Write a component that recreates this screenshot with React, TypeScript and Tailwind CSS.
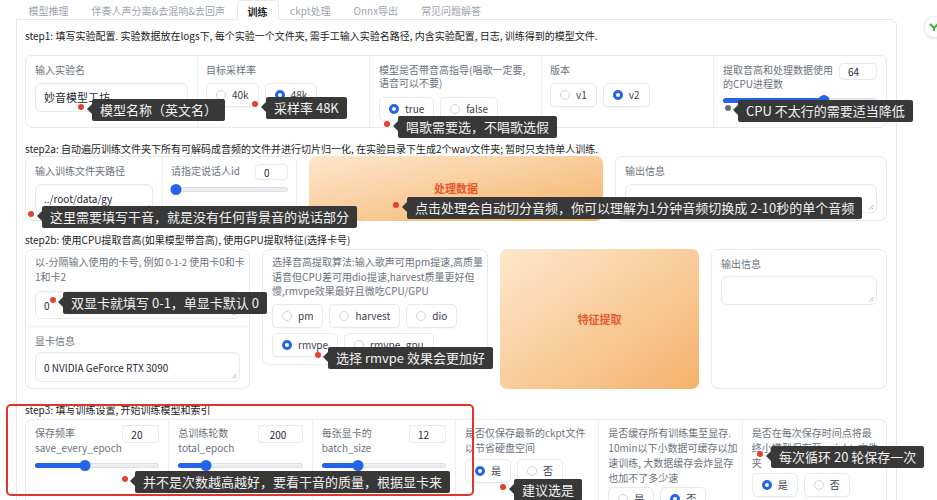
import React from "react";

const box = "rounded-[7px] border border-[#e8e9ed] bg-white";
const lab = "text-[10px] text-[#6b7280]";

function Radio({ label, on = false }: { label: string; on?: boolean }) {
  return (
    <div className="flex items-center gap-[6px] h-[24px] px-[9px] rounded-[5px] border border-[#e8e9ed] bg-white text-[10px] text-[#374151] shadow-[0_1px_1px_rgba(0,0,0,0.03)]">
      <span
        className={
          on
            ? "w-[10px] h-[10px] rounded-full border-[3px] border-[#2563eb] bg-white"
            : "w-[10px] h-[10px] rounded-full border border-[#d4d4d8] bg-white"
        }
      />
      <span className="leading-none">{label}</span>
    </div>
  );
}

function NumBox({ value, className }: { value: string; className: string }) {
  return (
    <div
      className={
        "shrink-0 flex items-center px-[8px] rounded-[4px] border border-[#e8e9ed] bg-white text-[10px] text-[#1f2937] " +
        className
      }
    >
      {value}
    </div>
  );
}

function Slider({ pct }: { pct: number }) {
  return (
    <div className="relative h-[10px] flex items-center">
      <div className="w-full h-[5px] rounded-full bg-[#eceef1] border border-[#dcdfe4]" />
      <div className="absolute inset-x-[5px] top-0 h-[10px]">
        <div
          className="absolute left-[-5px] top-[2.5px] h-[5px] rounded-full bg-[#2563eb]"
          style={{ width: `calc(${pct}% + 5px)` }}
        />
        <div
          className="absolute top-[-0.5px] w-[11px] h-[11px] rounded-full bg-[#2563eb] -translate-x-1/2"
          style={{ left: `${pct}%` }}
        />
      </div>
    </div>
  );
}

function TextBox({ value, className }: { value?: string; className: string }) {
  return (
    <div
      className={
        "relative flex items-center px-[8px] rounded-[6px] border border-[#e8e9ed] bg-white text-[10px] text-[#1f2937] shadow-[inset_0_1px_2px_rgba(0,0,0,0.03)] " +
        className
      }
    >
      {value}
      <svg className="absolute right-[2px] bottom-[2px]" width="6" height="6" viewBox="0 0 6 6">
        <path d="M5.5 1 L1 5.5 M5.5 3.5 L3.5 5.5" stroke="#9ca3af" strokeWidth="0.8" />
      </svg>
    </div>
  );
}

function Button({ label, className }: { label: string; className: string }) {
  return (
    <div
      className={
        "rounded-[7px] bg-linear-to-br from-[#fde7cc] to-[#f4b268] flex items-center justify-center text-[11px] font-semibold text-[#e8572a] " +
        className
      }
    >
      {label}
    </div>
  );
}

function Tip({
  x,
  y,
  dx,
  dy,
  text,
  gray = false,
}: {
  x: number;
  y: number;
  dx: number;
  dy: number;
  text: string;
  gray?: boolean;
}) {
  return (
    <>
      <div
        className={
          gray
            ? "absolute w-[6px] h-[6px] rounded-full bg-[#6b6b6b] -translate-x-1/2 -translate-y-1/2"
            : "absolute w-[6px] h-[6px] rounded-full bg-[#e2412f] -translate-x-1/2 -translate-y-1/2"
        }
        style={{ left: dx, top: dy }}
      />
      <div
        className="absolute h-[22px] px-[8px] rounded-[2px] bg-[#383838] text-[13px] leading-[22px] text-[#f2f2f2] whitespace-nowrap"
        style={{ left: x, top: y }}
      >
        <span className="absolute left-[-5px] top-[5px] w-0 h-0 border-y-[5px] border-y-transparent border-r-[5px] border-r-[#383838]" />
        {text}
      </div>
    </>
  );
}

export default function App() {
  const tabs = ["模型推理", "伴奏人声分离&去混响&去回声", "训练", "ckpt处理", "Onnx导出", "常见问题解答"];
  return (
    <div className="relative w-[937px] h-[500px] overflow-hidden bg-white font-['Noto_Sans_CJK_SC','Noto_Sans',sans-serif]">
      {/* tabs */}
      <div className="flex h-[19px] ml-[17px]">
        {tabs.map((t) =>
          t === "训练" ? (
            <div
              key={t}
              className="relative z-10 h-[20px] px-[10px] pt-[4px] leading-[14px] text-[10px] font-semibold text-[#222] bg-white border border-b-0 border-[#e5e7eb] rounded-t-[5px]"
            >
              {t}
            </div>
          ) : (
            <div key={t} className="px-[11.5px] pt-[4px] leading-[14px] text-[10px] text-[#9ca3af]">
              {t}
            </div>
          )
        )}
      </div>

      {/* panel */}
      <div className="ml-[16px] w-[881px] h-[490px] border border-[#e5e7eb] rounded-tr-[6px] pl-[8px] pt-[9px]">
        <div className="w-[862px]">
          <div className="text-[10px] leading-[14px] text-[#222]">
            step1: 填写实验配置. 实验数据放在logs下, 每个实验一个文件夹, 需手工输入实验名路径, 内含实验配置, 日志, 训练得到的模型文件.
          </div>
          <div className={box + " mt-[12px] h-[73px] grid grid-cols-5 divide-x divide-[#eeeff2]"}>
            <div className="px-[9px] pt-[7px]">
              <div className={lab + " leading-[13px]"}>输入实验名</div>
              <TextBox value="妙音模型工坊" className="mt-[7px] h-[29px] text-[11px]" />
            </div>
            <div className="px-[8px] pt-[7px]">
              <div className={lab + " leading-[13px]"}>目标采样率</div>
              <div className="mt-[7px] flex gap-[6px]">
                <Radio label="40k" />
                <Radio label="48k" on />
              </div>
            </div>
            <div className="px-[9px] pt-[7px]">
              <div className={lab + " leading-[13px]"}>
                模型是否带音高指导(唱歌一定要,
                <br />
                语音可以不要)
              </div>
              <div className="mt-[8px] flex gap-[6px]">
                <Radio label="true" on />
                <Radio label="false" />
              </div>
            </div>
            <div className="px-[8px] pt-[7px]">
              <div className={lab + " leading-[13px]"}>版本</div>
              <div className="mt-[7px] flex gap-[6px]">
                <Radio label="v1" />
                <Radio label="v2" on />
              </div>
            </div>
            <div className="px-[9px] pt-[7px]">
              <div className="flex justify-between">
                <div className={lab + " leading-[14px]"}>
                  提取音高和处理数据使用
                  <br />
                  的CPU进程数
                </div>
                <NumBox value="64" className="w-[38px] h-[17px]" />
              </div>
              <div className="mt-[4px]">
                <Slider pct={67} />
              </div>
            </div>
          </div>

          {/* step2a */}
          <div className="mt-[14px] text-[10px] leading-[14px] text-[#222]">
            step2a: 自动遍历训练文件夹下所有可解码成音频的文件并进行切片归一化, 在实验目录下生成2个wav文件夹; 暂时只支持单人训练.
          </div>
          <div className="grid grid-cols-[272px_294px_1fr] gap-[12px] h-[65px]">
            <div className={box + " grid grid-cols-[137px_1fr] divide-x divide-[#eeeff2]"}>
              <div className="px-[9px] pt-[7px]">
                <div className={lab + " leading-[13px]"}>输入训练文件夹路径</div>
                <TextBox value="../root/data/gy" className="mt-[7px] h-[29px]" />
              </div>
              <div className="px-[8px] pt-[7px]">
                <div className="flex justify-between">
                  <div className={lab + " leading-[13px]"}>请指定说话人id</div>
                  <NumBox value="0" className="w-[33px] h-[16px]" />
                </div>
                <div className="mt-[4px]">
                  <Slider pct={0} />
                </div>
              </div>
            </div>
            <Button label="处理数据" className="h-[65px]" />
            <div className={box + " px-[9px] pt-[7px]"}>
              <div className={lab + " leading-[13px]"}>输出信息</div>
              <TextBox className="mt-[7px] h-[29px]" />
            </div>
          </div>

          {/* step2b */}
          <div className="mt-[12px] text-[10px] leading-[14px] text-[#222]">
            step2b: 使用CPU提取音高(如果模型带音高), 使用GPU提取特征(选择卡号)
          </div>
          <div className="mt-[2px] grid grid-cols-[225px_226px_199px_1fr] gap-[12px] items-start">
            <div className={box + " h-[140px]"}>
              <div className="px-[9px] pt-[5px] pb-[7px] border-b border-[#eeeff2]">
                <div className={lab + " leading-[14px] whitespace-nowrap"}>
                  以-分隔输入使用的卡号, 例如 <span className="text-[9px]">0-1-2</span> 使用卡0和卡
                  <br />
                  1和卡2
                </div>
                <TextBox value="0" className="mt-[7px] h-[28px]" />
              </div>
              <div className="px-[9px] pt-[7px]">
                <div className={lab + " leading-[13px]"}>显卡信息</div>
                <TextBox value="0 NVIDIA GeForce RTX 3090" className="mt-[5px] h-[30px]" />
              </div>
            </div>
            <div className={box + " h-[116px] px-[9px] pt-[5px]"}>
              <div className={lab + " leading-[14.5px] whitespace-nowrap"}>
                选择音高提取算法:输入歌声可用pm提速,高质量
                <br />
                语音但CPU差可用dio提速,harvest质量更好但
                <br />
                慢,rmvpe效果最好且微吃CPU/GPU
              </div>
              <div className="mt-[5px] flex flex-wrap gap-x-[6px] gap-y-[5px]">
                <Radio label="pm" />
                <Radio label="harvest" />
                <Radio label="dio" />
                <Radio label="rmvpe" on />
                <Radio label="rmvpe_gpu" />
              </div>
            </div>
            <Button label="特征提取" className="h-[140px]" />
            <div className={box + " h-[140px] px-[9px] pt-[7px]"}>
              <div className={lab + " leading-[13px]"}>输出信息</div>
              <TextBox className="mt-[6px] h-[29px]" />
            </div>
          </div>

          {/* step3 */}
          <div className="mt-[14px] text-[10px] leading-[14px] text-[#222]">
            step3: 填写训练设置, 开始训练模型和索引
          </div>
          <div className={box + " mt-[2px] h-[100px] grid grid-cols-6 divide-x divide-[#eeeff2]"}>
            <div className="px-[9px] pt-[5px]">
              <div className="flex justify-between">
                <div className={lab + " leading-[15px]"}>
                  保存频率
                  <br />
                  save_every_epoch
                </div>
                <NumBox value="20" className="w-[37px] h-[18px]" />
              </div>
              <div className="mt-[5px]">
                <Slider pct={39} />
              </div>
            </div>
            <div className="px-[9px] pt-[5px]">
              <div className="flex justify-between">
                <div className={lab + " leading-[15px]"}>
                  总训练轮数
                  <br />
                  total_epoch
                </div>
                <NumBox value="200" className="w-[45px] h-[18px] pl-[11px]" />
              </div>
              <div className="mt-[5px]">
                <Slider pct={20} />
              </div>
            </div>
            <div className="px-[9px] pt-[5px]">
              <div className="flex justify-between">
                <div className={lab + " leading-[15px]"}>
                  每张显卡的
                  <br />
                  batch_size
                </div>
                <NumBox value="12" className="w-[37px] h-[18px]" />
              </div>
              <div className="mt-[5px]">
                <Slider pct={27} />
              </div>
            </div>
            <div className="px-[9px] pt-[5px]">
              <div className={lab + " leading-[15px] whitespace-nowrap"}>
                是否仅保存最新的ckpt文件
                <br />
                以节省硬盘空间
              </div>
              <div className="mt-[4px] flex gap-[6px]">
                <Radio label="是" on />
                <Radio label="否" />
              </div>
            </div>
            <div className="px-[9px] pt-[5px]">
              <div className={lab + " leading-[15px] whitespace-nowrap"}>
                是否缓存所有训练集至显存.
                <br />
                10min以下小数据可缓存以加
                <br />
                速训练, 大数据缓存会炸显存
                <br />
                也加不了多少速
              </div>
              <div className="mt-[2px] flex gap-[6px]">
                <Radio label="是" />
                <Radio label="否" on />
              </div>
            </div>
            <div className="px-[9px] pt-[5px]">
              <div className={lab + " leading-[15px] whitespace-nowrap"}>
                是否在每次保存时间点将最
                <br />
                终小模型保存至weights文件
                <br />夹
              </div>
              <div className="mt-[3px] flex gap-[6px]">
                <Radio label="是" on />
                <Radio label="否" />
              </div>
            </div>
          </div>
        </div>
      </div>

      {/* side widget */}
      <div className="absolute left-[924px] top-[16px] w-[22px] h-[22px] rounded-full bg-white border border-[#eeeeee] shadow-[0_1px_3px_rgba(0,0,0,0.12)] flex items-center pl-[4px]">
        <svg width="10" height="10" viewBox="0 0 10 10">
          <path d="M1 2 L5 6 L9 2 M5 6 L5 9" stroke="#43b04a" strokeWidth="2.2" fill="none" />
        </svg>
      </div>

      {/* red highlight */}
      <div className="absolute left-[6px] top-[404px] w-[468px] h-[92px] border-2 border-[#e0352b] rounded-[5px]" />

      {/* annotations */}
      <Tip x={92} y={99} dx={81} dy={107} text="模型名称（英文名）" />
      <Tip x={266} y={97} dx={255} dy={104} text="采样率 48K" />
      <Tip x={398} y={116} dx={387} dy={124} text="唱歌需要选，不唱歌选假" />
      <Tip x={738} y={100} dx={728} dy={108} text="CPU 不太行的需要适当降低" gray />
      <Tip x={42} y={206} dx={31} dy={214} text="这里需要填写干音，就是没有任何背景音的说话部分" />
      <Tip x={407} y={197} dx={396} dy={205} text="点击处理会自动切分音频，你可以理解为1分钟音频切换成 2-10秒的单个音频" />
      <Tip x={63} y={292} dx={53} dy={300} text="双显卡就填写 0-1，单显卡默认 0" />
      <Tip x={328} y={347} dx={318} dy={355} text="选择 rmvpe 效果会更加好" />
      <Tip x={135} y={471} dx={125} dy={479} text="并不是次数越高越好，要看干音的质量，根据显卡来" />
      <Tip x={514} y={479} dx={503} dy={487} text="建议选是" />
      <Tip x={771} y={446} dx={760} dy={454} text="每次循环 20 轮保存一次" />
    </div>
  );
}
